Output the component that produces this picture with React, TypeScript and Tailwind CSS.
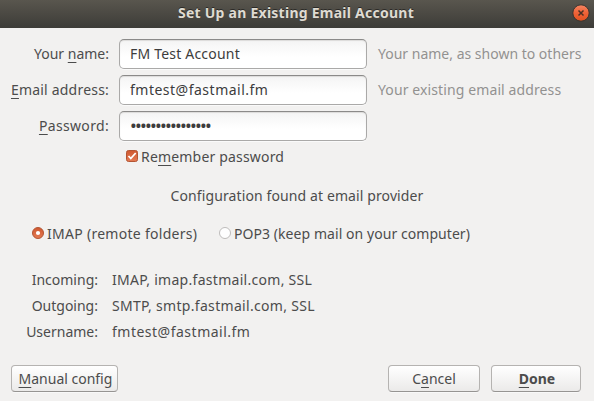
import type { ReactNode } from "react";
import clsx from "clsx";

function Key({ children }: { children: ReactNode }) {
  return <span className="underline decoration-1 underline-offset-[3px]">{children}</span>;
}

function Label({ className, children }: { className?: string; children: ReactNode }) {
  return <label className={clsx("w-[109px] shrink-0 text-right", className)}>{children}</label>;
}

function Field({ value, type = "text", className }: { value: string; type?: string; className?: string }) {
  return (
    <input
      type={type}
      defaultValue={value}
      className={clsx(
        "ml-2.5 h-[30px] w-[248px] shrink-0 rounded-[5px] border border-[#aaa9a8] border-t-[#8b8a89] bg-linear-to-b from-[#f4f4f4] to-white to-60% px-2.5 pb-0.5 text-[#3c3c3c] shadow-[0_1px_0_#fafafa,inset_0_1px_1px_#dcdbda] outline-none",
        className,
      )}
    />
  );
}

function Button({ className, children }: { className?: string; children: ReactNode }) {
  return (
    <button
      className={clsx(
        "h-[27px] rounded-[4px] border border-[#b5b3b1] border-b-[#969492] bg-linear-to-b from-white to-[#ebeae9] leading-[25px] shadow-[0_1px_0_#f8f8f8]",
        className,
      )}
    >
      {children}
    </button>
  );
}

const SERVERS = [
  { label: "Incoming:", value: "IMAP, imap.fastmail.com, SSL", spacing: "tracking-[0.29px]" },
  { label: "Outgoing:", value: "SMTP, smtp.fastmail.com, SSL", spacing: "tracking-[0.31px]" },
  { label: "Username:", value: "fmtest@fastmail.fm", spacing: "tracking-[0.5px]" },
];

export default function App() {
  return (
    <div className="flex h-[401px] w-[594px] flex-col overflow-hidden bg-[#f2f1f0] font-['Noto_Sans',sans-serif] text-[14px] leading-5 whitespace-nowrap text-[#4c4c4c]">
      <header className="flex h-7 items-center bg-linear-to-b from-[#59564e] to-[#3d3c38] pr-1 pb-0.5 pl-5">
        <h1 className="flex-1 text-center font-bold tracking-[0.25px] text-[#dfdbd2] [text-shadow:0_-1px_0_#2b2a27]">
          Set Up an Existing Email Account
        </h1>
        <button aria-label="Close">
          <svg className="size-[18px]" viewBox="0 0 18 18">
            <defs>
              <linearGradient id="close" x2="0" y2="1">
                <stop stopColor="#f58562" />
                <stop offset=".5" stopColor="#ee6237" />
                <stop offset="1" stopColor="#e0511f" />
              </linearGradient>
            </defs>
            <circle cx="9" cy="9" r="8.2" fill="url(#close)" stroke="#35342f" />
            <path d="M6.5 6.5l5 5m0-5l-5 5" stroke="#4a3024" strokeWidth="1.5" />
          </svg>
        </button>
      </header>

      <div className="flex flex-col gap-1.5 pt-[11px]">
        <div className="flex items-center">
          <Label>Your <Key>n</Key>ame:</Label>
          <Field value="FM Test Account" className="tracking-[0.2px]" />
          <span className="ml-[11px] text-[#929190]">Your name, as shown to others</span>
        </div>
        <div className="flex items-center">
          <Label className="tracking-[0.2px]"><Key>E</Key>mail address:</Label>
          <Field value="fmtest@fastmail.fm" className="tracking-[0.5px]" />
          <span className="ml-[11px] tracking-[0.11px] text-[#929190]">Your existing email address</span>
        </div>
        <div className="flex items-center">
          <Label className="tracking-[0.33px]"><Key>P</Key>assword:</Label>
          <Field type="password" value="0123456789abcdef" className="text-[18px] tracking-[-1.77px]" />
        </div>
      </div>

      <label className="mt-[6px] ml-[126px] flex items-center gap-[3px]">
        <svg className="mb-0.5 size-3" viewBox="0 0 12 12">
          <defs>
            <linearGradient id="tick" x2="0" y2="1">
              <stop stopColor="#cf582f" />
              <stop offset="1" stopColor="#e47a53" />
            </linearGradient>
          </defs>
          <rect x=".5" y=".5" width="11" height="11" rx="2" fill="url(#tick)" stroke="#b35533" />
          <path d="M2.5 6l2.3 2.5L9.7 3" fill="none" stroke="#fff" strokeWidth="1.8" />
        </svg>
        <span className="tracking-[0.18px]">Re<Key>m</Key>ember password</span>
      </label>

      <p className="mt-[19px] text-center tracking-[0.11px]">Configuration found at email provider</p>

      <div className="mt-[18px] ml-8 flex">
        <label className="flex w-[187px] items-center gap-[3px] tracking-[0.28px]">
          <svg className="mb-0.5 size-3" viewBox="0 0 12 12">
            <circle cx="6" cy="6" r="5.5" fill="url(#tick)" stroke="#b35533" />
            <circle cx="6" cy="6" r="2.1" fill="#fff" />
          </svg>
          IMAP (remote folders)
        </label>
        <label className="flex items-center gap-[3px] tracking-[0.06px]">
          <svg className="mb-0.5 size-3" viewBox="0 0 12 12">
            <circle cx="6" cy="6" r="5.5" fill="#fefefe" stroke="#bdbbba" />
          </svg>
          POP3 (keep mail on your computer)
        </label>
      </div>

      <dl className="mt-[26px] flex flex-col gap-1.5">
        {SERVERS.map((s) => (
          <div key={s.label} className="flex">
            <dt className="w-[98px] text-right">{s.label}</dt>
            <dd className={clsx("ml-3.5", s.spacing)}>{s.value}</dd>
          </div>
        ))}
      </dl>

      <footer className="mt-auto flex gap-[11px] pr-[13px] pb-[9px] pl-[11px]">
        <Button className="mr-auto w-[107px] pl-0.5">
          <Key>M</Key>anual config
        </Button>
        <Button className="w-[92px]">
          C<Key>a</Key>ncel
        </Button>
        <Button className="w-[90px] pl-0.5 font-bold">
          <Key>D</Key>one
        </Button>
      </footer>
    </div>
  );
}
